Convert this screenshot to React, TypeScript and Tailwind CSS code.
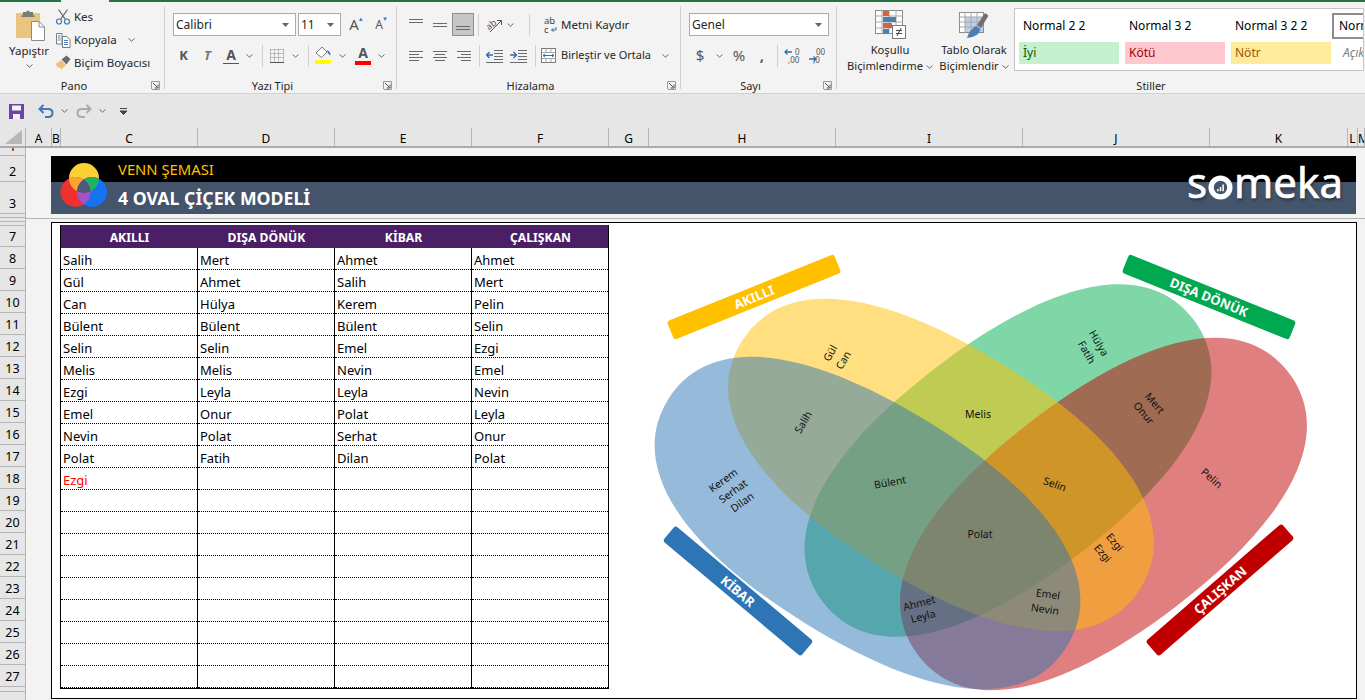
import type { ReactNode } from 'react'

const COLUMNS = [
  { label: 'A', w: 'w-[26px]' },
  { label: 'B', w: 'w-[9px]' },
  { label: 'C', w: 'w-[137px]' },
  { label: 'D', w: 'w-[137px]' },
  { label: 'E', w: 'w-[137px]' },
  { label: 'F', w: 'w-[137px]' },
  { label: 'G', w: 'w-[40px]' },
  { label: 'H', w: 'w-[187px]' },
  { label: 'I', w: 'w-[187px]' },
  { label: 'J', w: 'w-[187px]' },
  { label: 'K', w: 'w-[138px]' },
  { label: 'L', w: 'w-[10px]' },
  { label: 'M', w: 'w-[7px]' },
]

const TABLE = [
  ['Salih', 'Mert', 'Ahmet', 'Ahmet'],
  ['Gül', 'Ahmet', 'Salih', 'Mert'],
  ['Can', 'Hülya', 'Kerem', 'Pelin'],
  ['Bülent', 'Bülent', 'Bülent', 'Selin'],
  ['Selin', 'Selin', 'Emel', 'Ezgi'],
  ['Melis', 'Melis', 'Nevin', 'Emel'],
  ['Ezgi', 'Leyla', 'Leyla', 'Nevin'],
  ['Emel', 'Onur', 'Polat', 'Leyla'],
  ['Nevin', 'Polat', 'Serhat', 'Onur'],
  ['Polat', 'Fatih', 'Dilan', 'Polat'],
  ['Ezgi', '', '', ''],
]

const BLANK_ROWS = Array.from({ length: 9 }, () => ['', '', '', ''])

// center x, center y, rotation, text
const VENN_TEXT: [number, number, number, string][] = [
  [830, 353, -60, 'Gül'],
  [843, 360, -60, 'Can'],
  [803, 422, -60, 'Salih'],
  [978, 414, 0, 'Melis'],
  [1099, 343, 60, 'Hülya'],
  [1087, 352, 60, 'Fatih'],
  [1155, 403, 50, 'Mert'],
  [1144, 413, 50, 'Onur'],
  [1212, 478, 42, 'Pelin'],
  [723, 480, -36, 'Kerem'],
  [733, 491, -36, 'Serhat'],
  [742, 502, -36, 'Dilan'],
  [890, 482, -10, 'Bülent'],
  [980, 534, 0, 'Polat'],
  [1055, 484, 20, 'Selin'],
  [1115, 542, 50, 'Ezgi'],
  [1103, 553, 50, 'Ezgi'],
  [1048, 594, 8, 'Emel'],
  [1045, 609, 8, 'Nevin'],
  [919, 603, -15, 'Ahmet'],
  [923, 616, -15, 'Leyla'],
]

const VENN_BARS: [number, number, number, string, string][] = [
  [754, 297, -22, '#ffc000', 'AKILLI'],
  [1209, 297, 22, '#00a84f', 'DIŞA DÖNÜK'],
  [738, 591, 40, '#2e75b6', 'KİBAR'],
  [1220, 590, -41, '#c00000', 'ÇALIŞKAN'],
]

// blunted ellipse, the petals in the picture are a bit fuller than a true ellipse
function petal(cx: number, cy: number, a: number, b: number, deg: number, k: number) {
  const r = (deg * Math.PI) / 180
  const p = (x: number, y: number) =>
    `${(cx + x * Math.cos(r) - y * Math.sin(r)).toFixed(1)} ${(cy + x * Math.sin(r) + y * Math.cos(r)).toFixed(1)}`
  return [
    `M${p(-a, 0)}`,
    `C${p(-a, -b * k)} ${p(-a * k, -b)} ${p(0, -b)}`,
    `C${p(a * k, -b)} ${p(a, -b * k)} ${p(a, 0)}`,
    `C${p(a, b * k)} ${p(a * k, b)} ${p(0, b)}`,
    `C${p(-a * k, b)} ${p(-a, b * k)} ${p(-a, 0)}Z`,
  ].join(' ')
}

function Chev({ className = '' }: { className?: string }) {
  return (
    <svg width="7" height="4" viewBox="0 0 7 4" className={className}>
      <path d="M0.5 0.5 3.5 3.2 6.5 0.5" fill="none" stroke="#6a6a6a" />
    </svg>
  )
}

function Slot({ w, children }: { w: string; children?: ReactNode }) {
  return <div className={`${w} flex shrink-0 items-center justify-center`}>{children}</div>
}

function Sep() {
  return <div className="h-[22px] w-px bg-[#d0d0d0]" />
}

function Lines({ rows, y = 0, color = '#6a6a6a' }: { rows: [number, number][]; y?: number; color?: string }) {
  return (
    <svg width="16" height="16" viewBox="0 0 16 16">
      {rows.map(([x, w], i) => (
        <rect key={i} x={x} y={y + i * 3} width={w} height="1" fill={color} />
      ))}
    </svg>
  )
}

function Launcher() {
  return (
    <svg width="9" height="9" viewBox="0 0 9 9" className="absolute right-[4px] top-[3px]">
      <path d="M0.5 8V0.5H8.5V8.5H1" fill="none" stroke="#9a9a9a" />
      <path d="M2 2 6.5 6.5M7 3.5V7H3.5" fill="none" stroke="#555" />
    </svg>
  )
}

function Group({
  w,
  label,
  launcher = true,
  labelClass = 'pr-[16px]',
  children,
}: {
  w: string
  label: string
  launcher?: boolean
  labelClass?: string
  children: ReactNode
}) {
  return (
    <div className={`${w} flex shrink-0 flex-col`}>
      <div className="h-[77px]">{children}</div>
      <div className={`relative h-[15px] text-center text-[11px] leading-[16px] ${labelClass}`}>
        {label}
        {launcher && <Launcher />}
      </div>
    </div>
  )
}

function GroupLine() {
  return <div className="my-[4px] w-px shrink-0 bg-[#d0d0d0]" />
}

function Select({ w, text }: { w: string; text: string }) {
  return (
    <div className={`${w} flex h-[23px] items-center justify-between border border-[#ababab] bg-white pl-[2px] pr-[6px] text-[12px]`}>
      <span>{text}</span>
      <svg width="7" height="4" viewBox="0 0 7 4">
        <path d="M0 0H7L3.5 4Z" fill="#666" />
      </svg>
    </div>
  )
}

function ScissorsIcon() {
  return (
    <svg width="16" height="16" viewBox="0 0 16 16">
      <path d="M3.5 0.5 10.5 10.5M12.5 0.5 5.5 10.5" fill="none" stroke="#6a6a6a" strokeWidth="1.3" />
      <circle cx="4" cy="12.5" r="2.5" fill="none" stroke="#3f78b5" strokeWidth="1.2" />
      <circle cx="12" cy="12.5" r="2.5" fill="none" stroke="#3f78b5" strokeWidth="1.2" />
    </svg>
  )
}

function PasteIcon() {
  return (
    <svg width="30" height="31" viewBox="0 0 30 31">
      <rect x="0" y="3" width="24" height="25" rx="1" fill="#e9c57f" />
      <path d="M7 4V2H10Q12-1 14 2H17V4L19 7H5Z" fill="#7c7c7c" />
      <path d="M15.5 11.5H23L28.5 17V30.5H15.5Z" fill="#fff" stroke="#8a8a8a" />
      <path d="M23 11.5V17H28.5" fill="none" stroke="#8a8a8a" />
    </svg>
  )
}

function CopyIcon() {
  return (
    <svg width="16" height="16" viewBox="0 0 16 16">
      <path d="M1.5 1.5H7V12H1.5Z" fill="#fff" stroke="#7a7a7a" />
      <path d="M7.5 4.5H12L15 7.5V15.5H7.5Z" fill="#fff" stroke="#7a7a7a" />
      <path d="M9 8.5H13M9 10.5H13M9 12.5H13" stroke="#4a7fb5" />
      <path d="M3 4H5.5M3 6H5.5M3 8H5.5" stroke="#4a7fb5" />
    </svg>
  )
}

function BrushIcon() {
  return (
    <svg width="16" height="15" viewBox="0 0 16 15">
      <path d="M0.5 9 6 5 11 10 6.5 14.5 4 12 3 13Z" fill="#e9c57f" />
      <path d="M6.5 4.5 11.5 0.5 15.5 4 11.5 9.5Z" fill="#6b6b6b" />
    </svg>
  )
}

function FillIcon() {
  return (
    <svg width="18" height="20" viewBox="0 0 18 20">
      <path d="M2 7 8 1 13 6 7.5 11.5Z" fill="#fff" stroke="#7a7a7a" />
      <path d="M13 4Q17 6 16.5 9.5Q13.5 8 13 4Z" fill="#3f78b5" />
      <rect x="1" y="14" width="16" height="4" fill="#ffff00" />
    </svg>
  )
}

function LetterA({ color, bar }: { color: string; bar: string }) {
  return (
    <span className="flex flex-col items-center leading-none">
      <span className={`text-[14px] font-bold leading-[13px] ${color}`}>A</span>
      <span className={`mt-[2px] w-[16px] ${bar}`} />
    </span>
  )
}

function BordersIcon() {
  return (
    <svg width="14" height="14" viewBox="0 0 14 14">
      <path d="M0.5 0.5H13.5M0.5 4.5H13.5M0.5 8.5H13.5M0.5 0.5V13M4.5 0.5V13M8.5 0.5V13M13.5 0.5V13" stroke="#8a8a8a" strokeDasharray="1 1" fill="none" />
      <path d="M0 13.5H14" stroke="#555" />
    </svg>
  )
}

function OrientIcon() {
  return (
    <svg width="18" height="16" viewBox="0 0 18 16" className="overflow-visible">
      <text x="1" y="11" fontSize="9" fill="#555" transform="rotate(-40 6 8)">ab</text>
      <path d="M5 15 16 4M12 3.5 16.5 3.5 16.5 8" fill="none" stroke="#555" />
    </svg>
  )
}

function IndentIcon({ dir }: { dir: 'in' | 'out' }) {
  return (
    <svg width="17" height="14" viewBox="0 0 17 14">
      <path d="M8 1.5H17M8 4.5H17M8 7.5H17M8 10.5H17M0 13.5H17" stroke="#6a6a6a" fill="none" />
      <path d={dir === 'out' ? 'M0.5 6H7M3.5 3 0.5 6 3.5 9' : 'M0 6H6.5M3.5 3 6.5 6 3.5 9'} stroke="#2f6fae" strokeWidth="1.4" fill="none" />
    </svg>
  )
}

function WrapIcon() {
  return (
    <svg width="13" height="17" viewBox="0 0 13 17" className="overflow-visible">
      <text x="0" y="8" fontSize="9.5" fill="#444">ab</text>
      <text x="0" y="16.5" fontSize="9.5" fill="#444">c</text>
      <path d="M12 11V14H7.5M9.5 12.5 7.5 14 9.5 15.5" fill="none" stroke="#2f6fae" />
    </svg>
  )
}

function MergeIcon() {
  return (
    <svg width="15" height="15" viewBox="0 0 15 15">
      <rect x="0.5" y="0.5" width="14" height="14" fill="#fff" stroke="#7a7a7a" />
      <path d="M0.5 4.5H14.5M0.5 10.5H14.5M5 0.5V4M10 0.5V4M5 11V14.5M10 11V14.5" stroke="#a5a5a5" />
      <path d="M2 7.5H13M4 6 2 7.5 4 9M11 6 13 7.5 11 9" stroke="#2f6fae" fill="none" />
    </svg>
  )
}

function DecimalIcon({ more }: { more: boolean }) {
  return (
    <svg width="20" height="16" viewBox="0 0 20 16" fontSize="8" fill="#555" className="overflow-visible">
      <text x={more ? 11 : 7} y="7">{more ? '0' : '00'}</text>
      <text x="4" y="15">,{more ? '00' : '0'}</text>
      <path d={more ? 'M1 4H8M3.5 1.5 1 4 3.5 6.5' : 'M0 11H7M4.5 8.5 7 11 4.5 13.5'} stroke="#2f6fae" strokeWidth="1.3" fill="none" />
    </svg>
  )
}

function CondFormatIcon() {
  return (
    <svg width="31" height="29" viewBox="0 0 31 29">
      <rect x="0.5" y="0.5" width="27" height="23" fill="#fff" stroke="#8a8a8a" />
      <path d="M7 0V24M14 0V24M21 0V24M0 6H28M0 12H28M0 18H28" stroke="#a8a8a8" />
      <rect x="8" y="1" width="6" height="5" fill="#d9603b" />
      <rect x="8" y="7" width="13" height="5" fill="#4a7fb5" />
      <rect x="8" y="13" width="9" height="5" fill="#d9603b" />
      <rect x="8" y="19" width="6" height="5" fill="#4a7fb5" />
      <rect x="17.5" y="15.5" width="13" height="13" fill="#fff" stroke="#7a7a7a" />
      <path d="M21 20.5H27M21 23.5H27M22 26 26 18" stroke="#444" fill="none" />
    </svg>
  )
}

function TableFormatIcon() {
  return (
    <svg width="30" height="29" viewBox="0 0 30 29">
      <rect x="0.5" y="2.5" width="24" height="20" fill="#fff" stroke="#8a8a8a" />
      <rect x="6" y="7" width="18" height="15" fill="#bcd0e8" />
      <path d="M6 2V23M12 2V23M18 2V23M0 7H25M0 12H25M0 17H25" stroke="#a8a8a8" />
      <path d="M18 15 26 3 29.5 5.5 22 18Z" fill="#6f6f6f" />
      <path d="M8 28Q10 20 17 16L21.5 19Q20 27 8 28Z" fill="#4a7fb5" />
    </svg>
  )
}

function Ribbon() {
  return (
    <div className="flex h-[92px] border-b border-[#d2d2d2] bg-[#f3f3f3] font-['Noto_Sans',sans-serif] text-[11.5px] text-[#262626]">
      <Group w="w-[164px]" label="Pano">
        <div className="flex">
          <div className="flex w-[55px] shrink-0 flex-col items-center pl-[3px] pt-[8px]">
            <div className="ml-[3px]"><PasteIcon /></div>
            <div className="mt-[2px] leading-[16px]">Yapıştır</div>
            <Chev className="mt-[5px]" />
          </div>
          <div className="flex flex-col pt-[3px]">
            <div className="flex h-[23px] items-center">
              <ScissorsIcon />
              <span className="ml-[3px]">Kes</span>
            </div>
            <div className="flex h-[23px] items-center">
              <CopyIcon />
              <span className="ml-[3px]">Kopyala</span>
              <Chev className="ml-[11px]" />
            </div>
            <div className="flex h-[23px] items-center">
              <BrushIcon />
              <span className="ml-[3px]">Biçim Boyacısı</span>
            </div>
          </div>
        </div>
      </Group>
      <GroupLine />
      <Group w="w-[231px]" label="Yazı Tipi">
        <div className="flex items-center pl-[8px] pt-[11px]">
          <Select w="w-[123px]" text="Calibri" />
          <div className="w-[2px]" />
          <Select w="w-[43px]" text="11" />
          <Slot w="w-[26px]">
            <span className="relative text-[15px] leading-none text-[#555]">A<span className="absolute -right-[5px] -top-[1px] text-[6px] text-[#3f78b5]">▲</span></span>
          </Slot>
          <Slot w="w-[24px]">
            <span className="relative text-[12px] leading-none text-[#555]">A<span className="absolute -right-[5px] -top-[3px] text-[6px] text-[#3f78b5]">▼</span></span>
          </Slot>
        </div>
        <div className="mt-[8px] flex h-[23px] items-center pl-[7px]">
          <Slot w="w-[23px]"><span className="text-[13px] font-bold text-[#555]">K</span></Slot>
          <Slot w="w-[25px]"><span className="text-[13px] font-bold italic text-[#777]">T</span></Slot>
          <Slot w="w-[22px]"><LetterA color="text-[#555]" bar="h-px bg-[#555]" /></Slot>
          <Slot w="w-[15px]"><Chev /></Slot>
          <Slot w="w-[10px]"><Sep /></Slot>
          <Slot w="w-[20px]"><BordersIcon /></Slot>
          <Slot w="w-[16px]"><Chev /></Slot>
          <Slot w="w-[10px]"><Sep /></Slot>
          <Slot w="w-[20px]"><FillIcon /></Slot>
          <Slot w="w-[18px]"><Chev /></Slot>
          <Slot w="w-[24px]"><LetterA color="text-[#555]" bar="h-[4px] bg-[#ff0000]" /></Slot>
          <Slot w="w-[13px]"><Chev /></Slot>
        </div>
      </Group>
      <GroupLine />
      <Group w="w-[283px]" label="Hizalama">
        <div className="mt-[11px] flex h-[23px] items-center pl-[7px]">
          <Slot w="w-[24px]"><Lines rows={[[1, 14], [1, 14]]} y={2} /></Slot>
          <Slot w="w-[24px]"><Lines rows={[[1, 14], [1, 14]]} y={6} /></Slot>
          <div className="flex h-[23px] w-[22px] items-center justify-center border border-[#8f8f8f] bg-[#c6c6c6]"><Lines rows={[[1, 14], [1, 14]]} y={9} /></div>
          <Slot w="w-[8px]"><Sep /></Slot>
          <Slot w="w-[24px]"><OrientIcon /></Slot>
          <Slot w="w-[8px]"><Chev /></Slot>
          <Slot w="w-[30px]"><Sep /></Slot>
          <div className="flex items-center">
            <WrapIcon />
            <span className="ml-[4px]">Metni Kaydır</span>
          </div>
        </div>
        <div className="mt-[8px] flex h-[23px] items-center pl-[7px]">
          <Slot w="w-[24px]"><Lines rows={[[1, 14], [1, 10], [1, 14], [1, 10]]} y={3} /></Slot>
          <Slot w="w-[24px]"><Lines rows={[[1, 14], [3, 10], [1, 14], [3, 10]]} y={3} /></Slot>
          <Slot w="w-[24px]"><Lines rows={[[1, 14], [5, 10], [1, 14], [5, 10]]} y={3} /></Slot>
          <Slot w="w-[6px]"><Sep /></Slot>
          <Slot w="w-[24px]"><IndentIcon dir="out" /></Slot>
          <Slot w="w-[24px]"><IndentIcon dir="in" /></Slot>
          <Slot w="w-[10px]"><Sep /></Slot>
          <Slot w="w-[16px]"><MergeIcon /></Slot>
          <span className="ml-[5px] text-[11px]">Birleştir ve Ortala</span>
          <Chev className="ml-[11px]" />
        </div>
      </Group>
      <GroupLine />
      <Group w="w-[155px]" label="Sayı">
        <div className="pl-[8px] pt-[11px]">
          <Select w="w-[140px]" text="Genel" />
        </div>
        <div className="mt-[8px] flex h-[23px] items-center pl-[8px]">
          <Slot w="w-[22px]"><span className="text-[15px] text-[#555]">$</span></Slot>
          <Slot w="w-[16px]"><Chev /></Slot>
          <Slot w="w-[24px]"><span className="text-[15px] text-[#555]">%</span></Slot>
          <Slot w="w-[22px]"><span className="text-[15px] font-bold leading-none text-[#555]">,</span></Slot>
          <Slot w="w-[8px]"><Sep /></Slot>
          <Slot w="w-[26px]"><DecimalIcon more /></Slot>
          <Slot w="w-[24px]"><DecimalIcon more={false} /></Slot>
        </div>
      </Group>
      <GroupLine />
      <Group w="w-[528px]" label="Stiller" launcher={false} labelClass="pl-[100px]">
        <div className="flex text-[11.2px]">
          <div className="ml-[13px] flex w-[80px] shrink-0 flex-col items-center pt-[8px]">
            <CondFormatIcon />
            <div className="mt-[3px] leading-[16px]">Koşullu</div>
            <div className="whitespace-nowrap leading-[16px]">Biçimlendirme <Chev className="inline" /></div>
          </div>
          <div className="ml-[8px] flex w-[72px] shrink-0 flex-col items-center pt-[8px]">
            <TableFormatIcon />
            <div className="mt-[3px] whitespace-nowrap leading-[16px]">Tablo Olarak</div>
            <div className="whitespace-nowrap leading-[16px]">Biçimlendir <Chev className="inline" /></div>
          </div>
          <div className="ml-[4px] mt-[6px] h-[63px] w-[350px] shrink-0 overflow-hidden border border-[#c6c6c6] bg-white text-[12px]">
            <div className="flex h-[33px] items-center pl-[8px]">
              <span className="w-[106px] shrink-0 text-black">Normal 2 2</span>
              <span className="w-[106px] shrink-0 text-black">Normal 3 2</span>
              <span className="w-[97px] shrink-0 text-black">Normal 3 2 2</span>
              <span className="flex h-[26px] w-[60px] shrink-0 items-center border-2 border-[#8e8e8e] pl-[5px] text-black">Normal</span>
            </div>
            <div className="flex h-[22px] items-center gap-[6px] pl-[4px]">
              <span className="flex h-[22px] w-[100px] shrink-0 items-center bg-[#c6efce] pl-[4px] text-[#006100]">İyi</span>
              <span className="flex h-[22px] w-[100px] shrink-0 items-center bg-[#ffc7ce] pl-[4px] text-[#9c0006]">Kötü</span>
              <span className="flex h-[22px] w-[100px] shrink-0 items-center bg-[#ffeb9c] pl-[4px] text-[#9c5700]">Nötr</span>
              <span className="ml-[6px] shrink-0 italic text-[#7f7f7f]">Açıklama</span>
            </div>
          </div>
        </div>
      </Group>
    </div>
  )
}

function QuickAccess() {
  return (
    <div className="flex h-[34px] items-center bg-[#e6e6e6] pl-[9px]">
      <svg width="15" height="15" viewBox="0 0 15 15">
        <path d="M0 0H15V15H0Z" fill="#6a45a8" />
        <rect x="3" y="1.5" width="9" height="5" fill="#f2f2f2" />
        <rect x="4" y="10" width="7" height="5" fill="#f2f2f2" />
      </svg>
      <svg width="16" height="14" viewBox="0 0 16 14" className="ml-[14px]">
        <path d="M5.5 1 1.5 5 5.5 9M2 5H10Q14.5 5 14.5 9T10 13H7" fill="none" stroke="#3f78b5" strokeWidth="2" />
      </svg>
      <Chev className="ml-[7px]" />
      <svg width="16" height="14" viewBox="0 0 16 14" className="ml-[8px]">
        <path d="M10.5 1 14.5 5 10.5 9M14 5H6Q1.5 5 1.5 9T6 13H9" fill="none" stroke="#ababab" strokeWidth="2" />
      </svg>
      <Chev className="ml-[7px]" />
      <svg width="7" height="7" viewBox="0 0 7 7" className="ml-[14px]">
        <path d="M0 0.5H7M0 3H7L3.5 6.5Z" stroke="#444" strokeWidth="1" fill="#444" />
      </svg>
    </div>
  )
}

function ColumnHeaders() {
  return (
    <div className="flex h-[20px] border-b-2 border-[#ababab] bg-[#e6e6e6] font-['Open_Sans',sans-serif] text-[12px] leading-[18px] text-black">
      <div className="flex w-[26px] shrink-0 items-end justify-end border-r border-[#b5b5b5] pb-[2px] pr-[3px]">
        <svg width="17" height="14" viewBox="0 0 17 14">
          <path d="M17 0V14H0Z" fill="#b7b7b7" />
        </svg>
      </div>
      {COLUMNS.map((col) => (
        <div key={col.label} className={`${col.w} shrink-0 overflow-hidden border-r border-[#b5b5b5] pt-[2px] text-center`}>
          {col.label}
        </div>
      ))}
    </div>
  )
}

function RowHeader({ h, n }: { h: string; n?: number }) {
  return (
    <div className={`${h} flex items-end justify-center overflow-hidden border-b border-[#b5b5b5] leading-[18px]`}>{n}</div>
  )
}

function RowHeaders() {
  return (
    <div className="flex w-[26px] shrink-0 flex-col border-r border-[#b5b5b5] bg-[#e6e6e6] font-['Open_Sans',sans-serif] text-[12.5px] text-black">
      <div className="h-[8px] overflow-hidden border-b border-[#b5b5b5] text-center leading-[18px]">
        <div className="-mt-[10px]">1</div>
      </div>
      <RowHeader h="h-[26px]" n={2} />
      <RowHeader h="h-[32px]" n={3} />
      <RowHeader h="h-[4px]" />
      <RowHeader h="h-[4px]" />
      <RowHeader h="h-[4px]" />
      <RowHeader h="h-[21px]" n={7} />
      {Array.from({ length: 20 }, (_, i) => (
        <RowHeader key={i} h="h-[22px]" n={i + 8} />
      ))}
      <RowHeader h="h-[5px]" />
    </div>
  )
}

function Banner() {
  return (
    <div className="relative ml-[25px] mr-[9px] font-['Open_Sans',sans-serif]">
      <div className="flex h-[26px] items-center bg-black pl-[67px] text-[14.8px] text-[#ffc000]">VENN ŞEMASI</div>
      <div className="flex h-[32px] items-center bg-[#44546a] pl-[67px] text-[17.7px] font-bold text-white">4 OVAL ÇİÇEK MODELİ</div>
      <svg width="48" height="46" viewBox="0 0 48 46" className="absolute left-[9px] top-[6px]">
        <defs>
          <clipPath id="cy"><circle cx="24" cy="16" r="15" /></clipPath>
          <clipPath id="cr"><circle cx="15.5" cy="30" r="15" /></clipPath>
        </defs>
        <circle cx="24" cy="16" r="15" fill="#ffcf36" />
        <circle cx="15.5" cy="30" r="15" fill="#f23030" />
        <circle cx="32" cy="30" r="15" fill="#1572f2" />
        <circle cx="15.5" cy="30" r="15" fill="#fba52f" clipPath="url(#cy)" />
        <circle cx="32" cy="30" r="15" fill="#1fb35f" clipPath="url(#cy)" />
        <circle cx="32" cy="30" r="15" fill="#a94fc8" clipPath="url(#cr)" />
        <g clipPath="url(#cy)">
          <circle cx="32" cy="30" r="15" fill="#4c5a78" clipPath="url(#cr)" />
        </g>
      </svg>
      <div className="absolute right-[13px] top-0 flex items-baseline font-['Lato',sans-serif] text-[42px] leading-[52px] text-white [-webkit-text-stroke:0.7px_white] [text-shadow:1px_2px_3px_rgba(0,0,0,0.45)]">
        <span>s</span>
        <svg width="25" height="25" viewBox="0 0 26 26" className="mx-[1px] translate-y-[5px] self-center">
          <circle cx="13" cy="13" r="12.5" fill="#fff" />
          <circle cx="13" cy="13" r="7" fill="#44546a" />
          <path d="M9.5 14.5h1.6v2.5H9.5ZM12.2 12.5h1.6v4.5h-1.6ZM14.9 10h1.6v7h-1.6Z" fill="#fff" />
        </svg>
        <span>meka</span>
      </div>
    </div>
  )
}

function Cell({ text, red }: { text: string; red?: boolean }) {
  return (
    <div className="h-[22px] border-l border-black">
      <div className={`h-[22px] border-b border-dotted border-black pl-[2px] text-[13px] leading-[24px] ${red ? 'text-[#ff0000]' : 'text-black'}`}>
        {text}
      </div>
    </div>
  )
}

function VennDiagram() {
  return (
    <svg viewBox="52 223 1304 474" className="absolute left-0 top-0 h-[474px] w-[1304px] font-['Open_Sans',sans-serif]">
      <path d={petal(1008, 460.5, 233, 117.5, -37.3, 0.64)} fill="#00b050" fillOpacity="0.5" />
      <path d={petal(1103.5, 514, 233, 117.5, -37.3, 0.64)} fill="#c00000" fillOpacity="0.5" />
      <path d={petal(941, 465, 234.5, 118, 31.7, 0.64)} fill="#ffc000" fillOpacity="0.5" />
      <path d={petal(867.5, 523, 234.5, 118, 31.7, 0.64)} fill="#2e75b6" fillOpacity="0.5" />
      {VENN_TEXT.map(([x, y, rot, text], i) => (
        <text key={i} x={x} y={y} transform={`rotate(${rot} ${x} ${y})`} textAnchor="middle" dominantBaseline="central" fontSize="10.5" fill="#111">
          {text}
        </text>
      ))}
      {VENN_BARS.map(([x, y, rot, fill, text]) => (
        <g key={text} transform={`rotate(${rot} ${x} ${y})`}>
          <rect x={x - 90} y={y - 10} width="180" height="20" rx="3" fill={fill} />
          <text x={x} y={y} textAnchor="middle" dominantBaseline="central" fontSize="13" fontWeight="700" fill="#fff">
            {text}
          </text>
        </g>
      ))}
    </svg>
  )
}

function Worksheet() {
  const rows = [...TABLE, ...BLANK_ROWS]
  return (
    <div className="relative h-[477px] w-[1306px] border border-black bg-white font-['Open_Sans',sans-serif]">
      <VennDiagram />
      <div className="relative ml-[8px] mt-[2px] w-[549px] border-r border-black">
        <div className="grid h-[23px] grid-cols-[repeat(4,137px)] border-l border-black bg-[#4a1f66] text-center text-[12.2px] font-bold leading-[26px] text-white">
          <div>AKILLI</div>
          <div>DIŞA DÖNÜK</div>
          <div>KİBAR</div>
          <div>ÇALIŞKAN</div>
        </div>
        <div className="grid grid-cols-[repeat(4,137px)] border-b border-black">
          {rows.map((row, r) =>
            row.map((text, c) => <Cell key={`${r}-${c}`} text={text} red={r === 10} />),
          )}
        </div>
      </div>
    </div>
  )
}

export default function App() {
  return (
    <div className="flex h-[700px] w-[1365px] flex-col overflow-hidden bg-[#f3f3f3]">
      <div className="flex h-[2px] shrink-0 bg-[#217346]">
        <div className="ml-[61px] w-[48px] bg-[#f3f3f3]" />
      </div>
      <Ribbon />
      <QuickAccess />
      <ColumnHeaders />
      <div className="flex flex-1 overflow-hidden">
        <RowHeaders />
        <div className="flex flex-1 flex-col">
          <div className="h-[8px]" />
          <Banner />
          <div className="-ml-[1px] mt-[4px] h-px bg-[#b5b5b5]" />
          <div className="ml-[25px] mt-[3px]">
            <Worksheet />
          </div>
        </div>
      </div>
    </div>
  )
}
